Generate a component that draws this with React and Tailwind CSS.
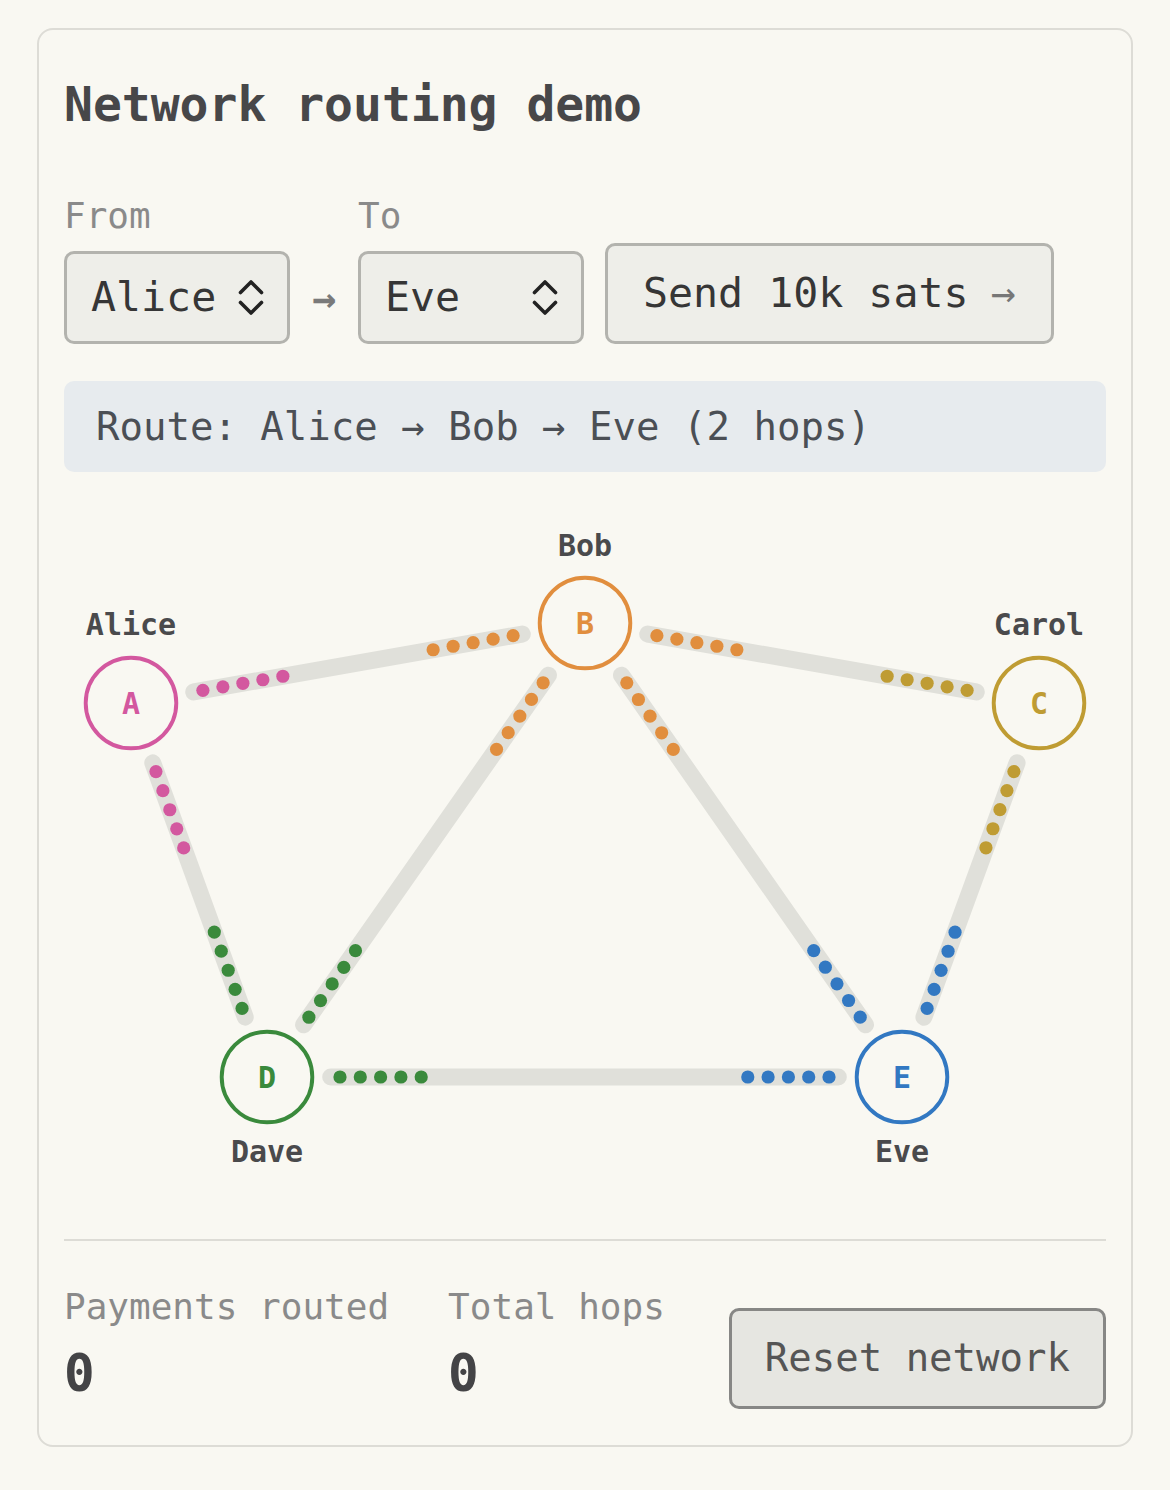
import React from "react";

const nodes = {
  A: { x: 131, y: 703, color: "#d3589f", name: "Alice", ly: 635 },
  B: { x: 585, y: 623, color: "#e18e3e", name: "Bob", ly: 556 },
  C: { x: 1039, y: 703, color: "#bf9c33", name: "Carol", ly: 635 },
  D: { x: 267, y: 1077, color: "#3a8a3c", name: "Dave", ly: 1162 },
  E: { x: 902, y: 1077, color: "#3278c2", name: "Eve", ly: 1162 },
};

const edges = [
  ["A", "B"],
  ["B", "C"],
  ["A", "D"],
  ["B", "D"],
  ["B", "E"],
  ["C", "E"],
  ["D", "E"],
];

function Chevrons() {
  return (
    <svg width="26" height="35" viewBox="0 0 26 35" fill="none">
      <path d="M2.5 12.5 L13 2 L23.5 12.5" stroke="#222" strokeWidth="3.6" strokeLinecap="round" strokeLinejoin="round" />
      <path d="M2.5 22.5 L13 33 L23.5 22.5" stroke="#222" strokeWidth="3.6" strokeLinecap="round" strokeLinejoin="round" />
    </svg>
  );
}

function Graph() {
  const OFF = 63.7;
  const DOT0 = 73;
  const STEP = 20.3;
  return (
    <svg width="1044" height="700" viewBox="64 500 1044 700" className="block">
      {edges.map(([s, t]) => {
        const a = nodes[s];
        const b = nodes[t];
        const dx = b.x - a.x;
        const dy = b.y - a.y;
        const len = Math.hypot(dx, dy);
        const ux = dx / len;
        const uy = dy / len;
        return (
          <g key={s + t}>
            <line
              x1={a.x + ux * OFF}
              y1={a.y + uy * OFF}
              x2={b.x - ux * OFF}
              y2={b.y - uy * OFF}
              stroke="#e0e0da"
              strokeWidth="17"
              strokeLinecap="round"
            />
            {[0, 1, 2, 3, 4].map((i) => (
              <circle
                key={"a" + i}
                cx={a.x + ux * (DOT0 + STEP * i)}
                cy={a.y + uy * (DOT0 + STEP * i)}
                r="6.6"
                fill={a.color}
              />
            ))}
            {[0, 1, 2, 3, 4].map((i) => (
              <circle
                key={"b" + i}
                cx={b.x - ux * (DOT0 + STEP * i)}
                cy={b.y - uy * (DOT0 + STEP * i)}
                r="6.6"
                fill={b.color}
              />
            ))}
          </g>
        );
      })}
      {Object.entries(nodes).map(([k, n]) => (
        <g key={k}>
          <circle cx={n.x} cy={n.y} r="45.3" fill="#f9f8f2" stroke={n.color} strokeWidth="3.9" />
          <text x={n.x} y={n.y + 11} textAnchor="middle" fontSize="30" fontWeight="bold" fill={n.color}>
            {k}
          </text>
          <text x={n.x} y={n.ly} textAnchor="middle" fontSize="30" fontWeight="bold" fill="#4a4a4c">
            {n.name}
          </text>
        </g>
      ))}
    </svg>
  );
}

export default function App() {
  return (
    <div className="min-h-[1490px] bg-[#f9f8f2] pt-[28px] px-[37px] font-['DejaVu_Sans_Mono',monospace]">
      <div className="rounded-[16px] border-2 border-[#dddcd6] px-[25px] pt-[46px] pb-[36px]">
        <h1 className="text-[48px] leading-[56px] font-bold text-[#474749]">Network routing demo</h1>

        <div className="mt-[63px] flex items-end">
          <div className="flex flex-col">
            <div className="text-[36px] leading-[42px] text-[#8a8a8a]">From</div>
            <div className="mt-[14px] flex h-[93px] w-[226px] items-center justify-between rounded-[10px] border-[3px] border-[#b3b3ae] bg-[#eeeee9] pl-[24px] pr-[23px] text-[41.6px] text-[#363636]">
              <span>Alice</span>
              <Chevrons />
            </div>
          </div>
          <div className="flex h-[93px] w-[68px] items-center justify-center text-[40px] font-bold text-[#7a7a7a]">→</div>
          <div className="flex flex-col">
            <div className="text-[36px] leading-[42px] text-[#8a8a8a]">To</div>
            <div className="mt-[14px] flex h-[93px] w-[226px] items-center justify-between rounded-[10px] border-[3px] border-[#b3b3ae] bg-[#eeeee9] pl-[24px] pr-[23px] text-[41.6px] text-[#363636]">
              <span>Eve</span>
              <Chevrons />
            </div>
          </div>
          <button className="ml-[21px] flex h-[101px] items-center rounded-[10px] border-[3px] border-[#b3b3ae] bg-[#eeeee9] px-[35px] text-[41.6px] text-[#363636]">
            <span>Send 10k sats</span>
            <span className="ml-[22px] text-[#777]">→</span>
          </button>
        </div>

        <div className="mt-[37px] flex h-[91px] items-center rounded-[10px] bg-[#e7ebee] px-[32px] text-[39px] leading-[46px] text-[#4b4f55]">
          Route: Alice → Bob → Eve (2 hops)
        </div>

        <div className="mt-[28px]">
          <Graph />
        </div>

        <div className="mt-[39px] h-[2px] bg-[#dddcd6]" />

        <div className="mt-[45px] flex items-start">
          <div className="flex flex-col">
            <div className="text-[36px] leading-[42px] text-[#8a8a8a]">Payments routed</div>
            <div className="mt-[16px] text-[51px] leading-[60px] font-bold text-[#444446]">0</div>
          </div>
          <div className="ml-[59px] flex flex-col">
            <div className="text-[36px] leading-[42px] text-[#8a8a8a]">Total hops</div>
            <div className="mt-[16px] text-[51px] leading-[60px] font-bold text-[#444446]">0</div>
          </div>
          <button className="ml-auto mt-[22px] flex h-[101px] items-center rounded-[10px] border-[3px] border-[#878785] bg-[#e6e6e1] px-[33px] text-[39px] text-[#555]">
            Reset network
          </button>
        </div>
      </div>
    </div>
  );
}
